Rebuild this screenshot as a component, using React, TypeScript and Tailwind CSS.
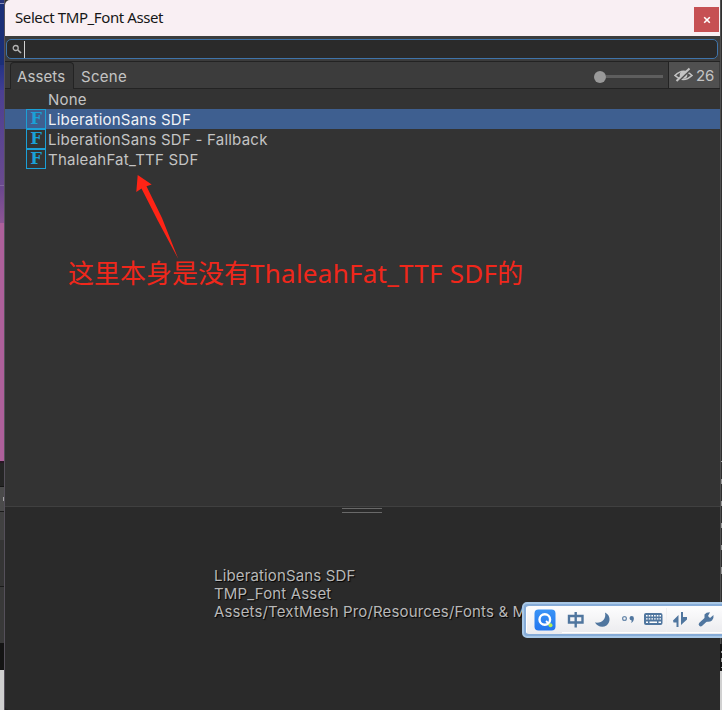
import React from "react";

function FontIcon() {
  return (
    <span className="flex h-5 w-5 shrink-0 items-center justify-center border border-[#1ba0d7] font-['DejaVu_Serif',serif] text-[16.500px] leading-none font-bold text-[#1ba0d7]">
      F
    </span>
  );
}

function Row({ label, icon = true, selected = false }: { label: string; icon?: boolean; selected?: boolean }) {
  return (
    <div className={`flex h-5 items-center pl-[21px] ${selected ? "bg-[#3e5f90] text-[#f0f3f8]" : "text-[#c4c4c4]"}`}>
      {icon ? <FontIcon /> : <span className="w-5" />}
      <span className="ml-[2px] pt-[2px] text-[15px] leading-5 tracking-[0.230px] whitespace-nowrap">{label}</span>
    </div>
  );
}

function LeftBackdrop() {
  return (
    <div className="flex w-[5px] shrink-0 flex-col border-r border-[#55505a]">
      <div className="h-[3px] bg-[#27357a]" />
      <div className="h-px bg-[#8a90b8]" />
      <div className="h-[61px] bg-[#1b2f77]" />
      <div className="h-[25px] bg-gradient-to-b from-[#243383] to-[#3f3d94]" />
      <div className="h-[95px] bg-gradient-to-b from-[#4b3f92] to-[#6a4a8f]" />
      <div className="h-px bg-[#81669f]" />
      <div className="h-[37px] bg-gradient-to-b from-[#69478e] to-[#8e5595]" />
      <div className="h-[238px] bg-[#ae609b]" />
      <div className="h-[2px] bg-[#2a1626]" />
      <div className="h-[23px] bg-[#252525]" />
      <div className="h-px bg-[#151515]" />
      <div className="flex h-[24px] items-center justify-end bg-[#4b4b4b]">
        <i className="h-1 w-px bg-[#a4a4a4]" />
      </div>
      <div className="h-px bg-[#1b1b1b]" />
      <div className="h-[28px] bg-[#414141]" />
      <div className="h-[46px] bg-[#353535]" />
      <div className="h-px bg-[#1b1b1b]" />
      <div className="h-[56px] bg-[#393939]" />
      <div className="h-[27px] bg-[#141414]" />
      <div className="flex-1 bg-[#d0d0d0]" />
    </div>
  );
}

function RightBackdrop() {
  return (
    <div className="relative flex w-[2px] shrink-0 flex-col bg-[#2f2f2f]">
      <div className="h-[644px] border-l border-[#505050]" />
      <div className="h-[27px] bg-[#141414]" />
      <div className="flex-1 bg-[#d0d0d0]" />
      <div className="absolute top-[461px] right-0 flex w-px flex-col gap-[17px]">
        <i className="h-px bg-[#aaa]" />
        <i className="h-[5px] bg-[#999]" />
        <i className="h-[5px] bg-[#999]" />
        <i className="h-[5px] bg-[#999]" />
        <i className="h-[5px] bg-[#999]" />
        <i className="h-[7px] bg-[#999]" />
      </div>
      <div className="absolute top-[651px] right-0 flex w-px flex-col gap-[5px]">
        <i className="h-[2px] bg-[#999]" />
        <i className="h-[4px] bg-[#999]" />
        <i className="h-px bg-[#999]" />
      </div>
    </div>
  );
}

function InputBar() {
  return (
    <div className="absolute top-[602px] left-[522px] flex h-9 w-[206px] items-center rounded-[5px] border-2 border-[#a9c8e6] bg-[#86acd8] p-[2px]">
      <svg width="198" height="28" viewBox="526 606 198 28" className="rounded-[3px]">
        <defs>
          <linearGradient id="bar" x2="0" y2="1">
            <stop stopColor="#fdfdfe" />
            <stop offset="1" stopColor="#ebebee" />
          </linearGradient>
          <linearGradient id="q" x2="0" y2="1">
            <stop stopColor="#3a94f6" />
            <stop offset="1" stopColor="#2376ee" />
          </linearGradient>
        </defs>
        <rect x="526" y="606" width="198" height="28" fill="url(#bar)" />
        <path d="M526.500 606V634M562 632.500H722" stroke="#fff" />
        <path d="M666.500 608V632" stroke="#efeff1" />
        <rect x="534.500" y="609.500" width="21" height="21" rx="4" fill="url(#q)" />
        <circle cx="544.800" cy="619.500" r="5.300" fill="none" stroke="#fff" strokeWidth="2.400" />
        <path d="M546 621L549 624" stroke="#fff" strokeWidth="1.800" />
        <circle cx="550.500" cy="625.300" r="2" fill="#b5ed52" />
        <g fill="none" stroke="#50769f" strokeWidth="2.400">
          <path d="M569 616H582.500V622.500H569ZM575.700 612V627.500" />
        </g>
        <path d="M605 612.500C610.500 615 611 622 606.500 625.500C602 628.500 597 626 595 622.500C602 623.500 606.500 619 605 612.500Z" fill="#50769f" />
        <circle cx="624.500" cy="618.500" r="1.900" fill="none" stroke="#6d8cae" strokeWidth="1.300" />
        <path d="M629.500 618.200A2.200 2.200 0 1 1 633.900 618.200Q633.800 621.800 631 623Q632 621.500 631.500 620.200Q629.700 620 629.500 618.200Z" fill="#50769f" />
        <rect x="644" y="613" width="18.500" height="12" rx="2" fill="#50769f" />
        <path d="M646 615.800H661M646 618.900H661" stroke="#fff" strokeWidth="1.400" strokeDasharray="1.600 1.100" />
        <path d="M646 622.300H648M649.500 622.300H657M658.500 622.300H661" stroke="#fff" strokeWidth="1.400" />
        <path d="M673 620.500L678.500 615V627H676.500V622.500H673.500ZM687 619.500L681 625V617H687ZM681 612H683V618H681Z" fill="#50769f" />
        <path d="M700.800 624.300L706.500 619" stroke="#50769f" strokeWidth="4.200" strokeLinecap="round" />
        <path d="M704.500 617.500V614.500Q706 612.300 710 612.300L708 616L710 618L713.500 615Q714 618.500 712 620.500Q709.500 622.500 706 621.500Z" fill="#50769f" />
      </svg>
    </div>
  );
}

export default function App() {
  return (
    <div className="relative flex h-[710px] w-[722px] overflow-hidden bg-[#202020] font-['Inter',sans-serif]">
      <LeftBackdrop />
      <main className="flex w-[715px] shrink-0 flex-col rounded-bl-[5px] bg-[#333333]">
        <header className="flex h-9 items-center justify-between rounded-tl-[5px] bg-[#f9eff3] pr-[1px] pl-[10px]">
          <h1 className="-mt-[2px] font-['Noto_Sans',sans-serif] text-[15px] leading-9 tracking-[-0.400px] text-[#161616]">Select TMP_Font Asset</h1>
          <button className="mt-[3px] flex h-[25px] w-[25px] items-center justify-center bg-[#c65053]">
            <svg width="8" height="8" viewBox="0 0 8 8"><path d="M1.200 1.200L6.800 6.800M6.800 1.200L1.200 6.800" stroke="#fff" strokeWidth="1.600" /></svg>
          </button>
        </header>
        <div className="h-[25px] bg-[#3c3c3c] px-[1px] pt-[3px]">
          <div className="flex h-5 w-[712px] items-center rounded-[5px] border border-[#3f74aa] bg-[#2a2a2a] pl-[5px]">
            <svg width="11" height="12" viewBox="0 0 11 12" fill="none" stroke="#b4b4b4"><circle cx="3.700" cy="5" r="2.500" strokeWidth="1.300" /><path d="M5.800 7L9 10" strokeWidth="1.700" /></svg>
            <span className="ml-[1px] h-[17px] w-px bg-[#d0d0d0]" />
          </div>
        </div>
        <nav className="flex h-7 items-stretch border-t border-b border-[#232323] bg-[#3c3c3c] text-[15px] text-[#c4c4c4]">
          <div className="-mb-px ml-[5px] flex w-[64px] items-center rounded-t-[4px] border border-b-0 border-[#232323] bg-[#353535] pt-[2px] pl-[6px] tracking-[0.100px]">Assets</div>
          <div className="flex items-center pt-[4px] pl-[7px] tracking-[0.300px]">Scene</div>
          <div className="ml-auto flex items-center pt-[3px] pr-[5px]">
            <span className="h-3 w-3 rounded-full bg-[#999]" />
            <span className="h-[3px] w-[57px] bg-[#5e5e5e]" />
          </div>
          <div className="mr-px flex w-[51px] items-center gap-[3px] border-l border-[#232323] bg-[#505050] pt-px pl-[5px]">
            <svg className="-mt-[2px] shrink-0" width="19" height="16" viewBox="0 0 19 16" fill="none" stroke="#c4c4c4" strokeWidth="1.600">
              <path d="M1 8.500Q9.500 0 18 8.500Q9.500 16.500 1 8.500Z" /><circle cx="9.500" cy="8" r="3" fill="#c4c4c4" />
              <path d="M4 14.500L17 2" stroke="#505050" strokeWidth="2" /><path d="M2.500 14L15.500 1.500" strokeWidth="2" />
            </svg>
            <span className="pt-px tracking-[-0.200px]">26</span>
          </div>
        </nav>
        <section className="relative h-[417px]">
          <Row label="None" icon={false} />
          <Row label="LiberationSans SDF" selected />
          <Row label="LiberationSans SDF - Fallback" />
          <Row label="ThaleahFat_TTF SDF" />
          <svg className="absolute top-[84px] left-[125px]" width="55" height="90" viewBox="0 0 55 90"><path d="M7.700 2L21.700 11.500L16.500 13.200L32 45L48.300 86L28 48L11.500 15.500L6.300 19Z" fill="#ff2416" /></svg>
          <p className="absolute top-[165px] left-[63px] font-['Noto_Sans','Noto_Sans_CJK_SC',sans-serif] text-[26px] leading-[38px] whitespace-nowrap text-[#f0271b]">
            这里本身是没有<span className="tracking-[0.260px]">ThaleahFat_TTF SDF</span>的
          </p>
        </section>
        <section className="flex flex-1 flex-col rounded-bl-[5px] border-t border-[#404040] bg-[#2a2a2a]">
          <div className="mt-px ml-[337px] h-[5px] w-10 border-y border-[#696969]" />
          <div className="mt-[54px] ml-[209px] text-[15px] leading-[18px] tracking-[0.150px] whitespace-nowrap text-[#b8b8b8] [text-shadow:1px_1px_1px_#000]">
            <p>LiberationSans SDF</p>
            <p>TMP_Font Asset</p>
            <p>Assets/TextMesh Pro/Resources/Fonts &amp; M</p>
          </div>
        </section>
      </main>
      <RightBackdrop />
      <InputBar />
    </div>
  );
}
